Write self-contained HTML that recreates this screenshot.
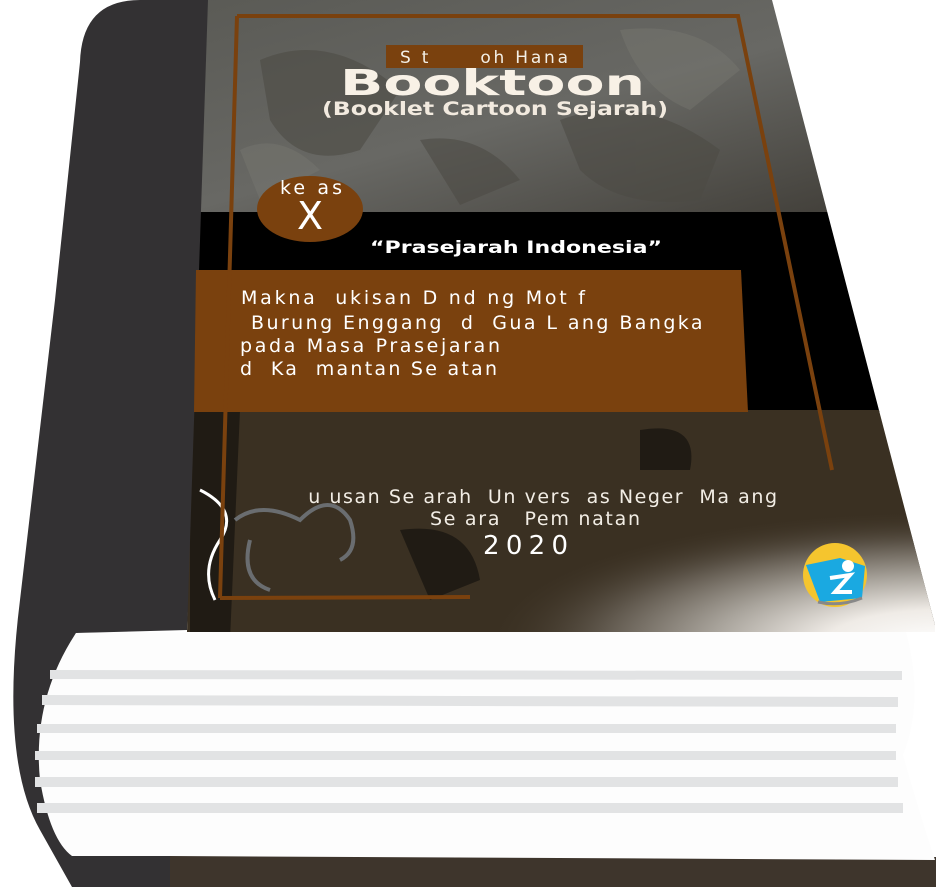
<!DOCTYPE html>
<html><head><meta charset="utf-8"><style>
html,body{margin:0;padding:0;background:#fff;}
svg{display:block}
text{font-family:"DejaVu Sans","Liberation Sans",sans-serif;white-space:pre;}
</style></head><body>
<svg width="936" height="887" viewBox="0 0 936 887" xmlns="http://www.w3.org/2000/svg">
<defs>
<linearGradient id="top" x1="0" y1="0" x2="1" y2="1">
<stop offset="0" stop-color="#5a5a55"/><stop offset="0.5" stop-color="#686864"/><stop offset="1" stop-color="#3d3a34"/>
</linearGradient>
<radialGradient id="fade" cx="1.0" cy="1.05" r="0.6">
<stop offset="0" stop-color="#ffffff"/><stop offset="0.25" stop-color="#efebe6"/><stop offset="0.5" stop-color="#a8a39b"/><stop offset="0.75" stop-color="#5e564b"/><stop offset="1" stop-color="#3a3022" stop-opacity="0"/>
</radialGradient>
<clipPath id="cov"><path d="M208 0 L772 0 L935 625 L935 632 L187 632 Z"/></clipPath>
</defs>
<path d="M170 855 L936 857 L936 887 L170 887 Z" fill="#3e352c"/>
<path d="M215 0 L140 0 Q82 0 80 62 L55 300 L20 600 Q0 760 40 830 L72 887 L170 887 L170 855 Q95 857 75 820 Q28 740 76 633 L187 630 L205 300 Z" fill="#333133"/>
<path d="M76 633 L905 628 Q925 700 903 755 Q920 815 935 860 L170 856 L72 856 Q50 840 40 780 Q32 700 76 633 Z" fill="#fdfdfd"/>
<g fill="#e2e3e4">
<path d="M50 670 L902 671 L902 680 L50 679 Z"/>
<path d="M42 695 L898 697 L898 707 L42 705 Z"/>
<path d="M37 724 L896 724 L896 733 L37 733 Z"/>
<path d="M35 751 L896 751 L896 760 L35 760 Z"/>
<path d="M35 777 L898 777 L898 787 L35 787 Z"/>
<path d="M37 803 L903 803 L903 813 L37 813 Z"/>
</g>
<g clip-path="url(#cov)">
<rect x="180" y="0" width="760" height="212" fill="url(#top)"/>
<g fill="#4d4b45" opacity="0.6">
<path d="M260 60 Q330 30 400 90 L360 150 Q300 170 270 120Z"/>
<path d="M560 120 Q640 90 720 150 L700 200 Q620 210 580 170Z"/>
<path d="M420 140 Q480 130 520 180 L460 205 Z"/>
</g>
<g fill="#7a7a74" opacity="0.4">
<path d="M620 30 Q700 20 740 70 L690 110 Q640 90 620 30Z"/>
<path d="M240 150 Q280 130 320 170 L260 200Z"/>
</g>
<rect x="180" y="212" width="760" height="200" fill="#000"/>
<rect x="180" y="410" width="760" height="222" fill="#3a3022"/>
<g fill="#1a1612" opacity="0.8">
<path d="M640 430 Q700 420 690 470 L640 470Z"/>
<path d="M400 530 Q470 520 480 580 L430 600Z"/>
<path d="M190 410 L240 410 L230 640 L190 640Z"/>
</g>
<rect x="180" y="410" width="760" height="222" fill="url(#fade)"/>
<path d="M200 490 Q240 510 220 540 Q200 570 215 600" stroke="#fff" stroke-width="3" fill="none"/>
<path d="M235 520 Q260 500 300 520 Q330 490 350 520 Q360 550 340 560 M250 540 Q240 580 270 590" stroke="#6a6d70" stroke-width="4" fill="none"/>
</g>
<path d="M196 270 L741 270 L748 412 L194 412 Z" fill="#7a410e"/>
<path d="M237 16 L738 16 L832 470 M220 598 L470 597 M220 598 L237 16" stroke="#7a410e" stroke-width="4" fill="none"/>
<rect x="386" y="45" width="197" height="23" fill="#7a410e"/>
<text x="400" y="63" font-size="17" fill="#f3efe6" textLength="168" lengthAdjust="spacing" xml:space="preserve">S t      oh Hana</text>
<text x="340" y="95" font-size="36" font-weight="bold" fill="#f8f1e6" font-family="Liberation Sans" textLength="305" lengthAdjust="spacingAndGlyphs">Booktoon</text>
<text x="322" y="115" font-size="19" font-weight="bold" fill="#f2eadf" font-family="Liberation Serif" textLength="346" lengthAdjust="spacingAndGlyphs">(Booklet Cartoon Sejarah)</text>
<ellipse cx="310" cy="209" rx="53" ry="33" fill="#7a410e"/>
<text x="280" y="194" font-size="19" fill="#fff" textLength="62" lengthAdjust="spacing" xml:space="preserve">ke as</text>
<text x="310" y="229" font-size="38" fill="#fff" text-anchor="middle">X</text>
<text x="370" y="253" font-size="17" font-weight="bold" fill="#fff" textLength="292" lengthAdjust="spacingAndGlyphs">“Prasejarah Indonesia”</text>
<g font-size="19" fill="#fff">
<text x="241" y="304" textLength="344" lengthAdjust="spacing" xml:space="preserve">Makna  ukisan D nd ng Mot f</text>
<text x="251" y="329" textLength="460" lengthAdjust="spacing" xml:space="preserve">Burung Enggang  d  Gua L ang Bangka </text>
<text x="240" y="352" textLength="260" lengthAdjust="spacing" xml:space="preserve">pada Masa Prasejaran</text>
<text x="240" y="375" textLength="257" lengthAdjust="spacing" xml:space="preserve">d  Ka  mantan Se atan</text>
</g>
<g font-size="19" fill="#f2ede5">
<text x="293" y="503" textLength="484" lengthAdjust="spacing" xml:space="preserve">  u usan Se arah  Un vers  as Neger  Ma ang</text>
<text x="430" y="525" textLength="210" lengthAdjust="spacing" xml:space="preserve">Se ara   Pem natan</text>
</g>
<text x="483" y="554" font-size="26" fill="#fff" textLength="85" lengthAdjust="spacing">2020</text>
<circle cx="835" cy="575" r="32" fill="#f5c52e"/>
<path d="M806 565 L840 558 L865 566 L862 598 L820 602 Z" fill="#1aa9e1"/>
<circle cx="848" cy="566" r="6" fill="#fff"/>
<path d="M830 578 L850 575 L835 592 L852 592" stroke="#fff" stroke-width="4" fill="none"/>
<path d="M818 602 Q840 607 862 598" stroke="#888" stroke-width="3" fill="none"/>
</svg>
</body></html>
